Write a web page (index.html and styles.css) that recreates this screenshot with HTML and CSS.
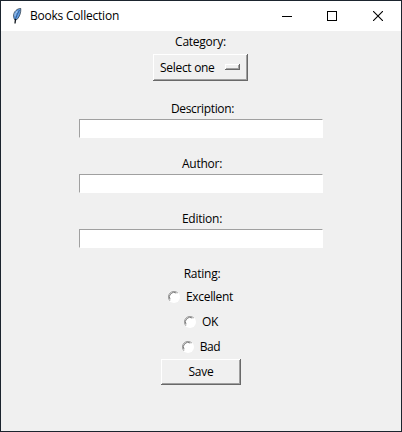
FILE: index.html
```html
<!DOCTYPE html>
<html lang="en">
<head>
<meta charset="utf-8">
<title>Books Collection</title>
<link rel="stylesheet" href="styles.css">
</head>
<body>
<div class="window">
  <header class="titlebar">
    <svg class="feather" width="10" height="16" viewBox="0 0 10 16">
      <path d="M3 12C.6 9 1.400 4.500 4 2.400C5.500 1 7.500.3 8.800.5C9 4 8 8.500 5 11.500Z" fill="#5f9ce4" stroke="#35424f" stroke-width=".8"/>
      <path d="M7.500 2C5.800 5 4.400 8 3.500 11" fill="none" stroke="#24446c" stroke-width=".7"/>
      <path d="M3.500 11L3 15.500" fill="none" stroke="#0b1118" stroke-width="1.300"/>
      <path d="M3.200 5L3 8M5 3L4.400 5" fill="none" stroke="#c4d5e5" stroke-width=".8"/>
    </svg>
    <h1 class="title">Books Collection</h1>
    <div class="controls">
      <svg class="minimize" width="10" height="10" viewBox="0 0 10 10" shape-rendering="crispEdges"><path d="M0 5.500H10" stroke="#000"/></svg>
      <svg width="10" height="10" viewBox="0 0 10 10" shape-rendering="crispEdges"><path d="M.5.5H9.500V9.500H.5Z" fill="none" stroke="#000"/></svg>
      <svg width="10" height="10" viewBox="0 0 10 10"><path d="M0 0L10 10M10 0L0 10" stroke="#000" stroke-width="1.100"/></svg>
    </div>
  </header>
  <main class="form">
    <div class="label category">Category:</div>
    <button class="raised menu"><span>Select one</span><i class="indicator"></i></button>
    <div class="field"><label class="label description" for="d">Description:</label><input id="d" class="entry"></div>
    <div class="field"><label class="label" for="a">Author:</label><input id="a" class="entry"></div>
    <div class="field"><label class="label" for="e">Edition:</label><input id="e" class="entry"></div>
    <div class="label rating">Rating:</div>
    <div class="radio excellent"><svg width="12" height="12" viewBox="0 0 12 12"><use href="#dot"/></svg><span>Excellent</span></div>
    <div class="radio"><svg width="12" height="12" viewBox="0 0 12 12"><use href="#dot"/></svg><span>OK</span></div>
    <div class="radio bad"><svg width="12" height="12" viewBox="0 0 12 12"><use href="#dot"/></svg><span>Bad</span></div>
    <button class="raised save">Save</button>
  </main>
</div>
<svg class="defs" width="0" height="0">
  <g id="dot">
    <circle cx="6" cy="6" r="6" fill="#fff"/>
    <path d="M2 9.900A5.500 5.500 0 0 1 9.900 2" fill="none" stroke="#a0a0a0"/>
    <path d="M2 8.300A4.600 4.600 0 0 1 8.300 2" fill="none" stroke="#696969" stroke-width=".9"/>
  </g>
</svg>
</body>
</html>
```
FILE: styles.css
```css
* { box-sizing: border-box; }
body {
  margin: 0;
  overflow: hidden;
  background: #1b242e;
  font: 12px/16px "Open Sans", "Noto Sans", sans-serif;
  color: #000;
}
.window { width: 402px; height: 432px; border: 1px solid #1b242e; background: #f0f0f0; }
.titlebar { display: flex; align-items: center; height: 30px; padding: 0 18px 0 11px; background: #fff; }
.title { margin: 0 0 0 8px; font: inherit; letter-spacing: -0.22px; white-space: nowrap; }
.controls { display: flex; gap: 36px; margin-left: auto; }
.controls svg { display: block; }
.controls .minimize { margin-right: -1px; }
.form { display: flex; flex-direction: column; align-items: center; }
.label { display: flex; justify-content: center; align-items: center; height: 21px; padding-left: 2px; letter-spacing: -0.25px; }
.category { padding: 0 1px 0 0; }
.description { padding-left: 3px; letter-spacing: -0.35px; }
.raised {
  display: flex;
  align-items: center;
  border: 0;
  padding: 0;
  background: #f0f0f0;
  font: inherit;
  color: inherit;
  box-shadow: inset -1px -1px #696969, inset 1px 1px #fff, inset -2px -2px #a0a0a0;
}
.menu { width: 95px; height: 27px; margin: 2px 1px 2px 0; padding: 0 8px 0 7px; justify-content: space-between; letter-spacing: -0.3px; white-space: nowrap; }
.indicator { width: 15px; height: 6px; margin-bottom: 1px; box-shadow: inset -1px -1px #696969, inset 1px 1px #fff, inset -2px -2px #a0a0a0; }
.field { margin-top: 15px; }
.entry {
  display: block;
  width: 244px;
  height: 19px;
  border: 1px solid #fff;
  border-top-color: #a0a0a0;
  border-left-color: #a0a0a0;
  padding: 0 2px;
  background: #fff;
  font: inherit;
  outline: 0;
}
.rating { margin-top: 15px; }
.radio { display: flex; align-items: center; gap: 6px; height: 25px; letter-spacing: -0.25px; }
.excellent { padding-right: 1px; letter-spacing: -0.3px; }
.bad { letter-spacing: -0.35px; }
.save { width: 80px; height: 26px; justify-content: center; letter-spacing: -0.25px; }
.defs { position: absolute; }
```
